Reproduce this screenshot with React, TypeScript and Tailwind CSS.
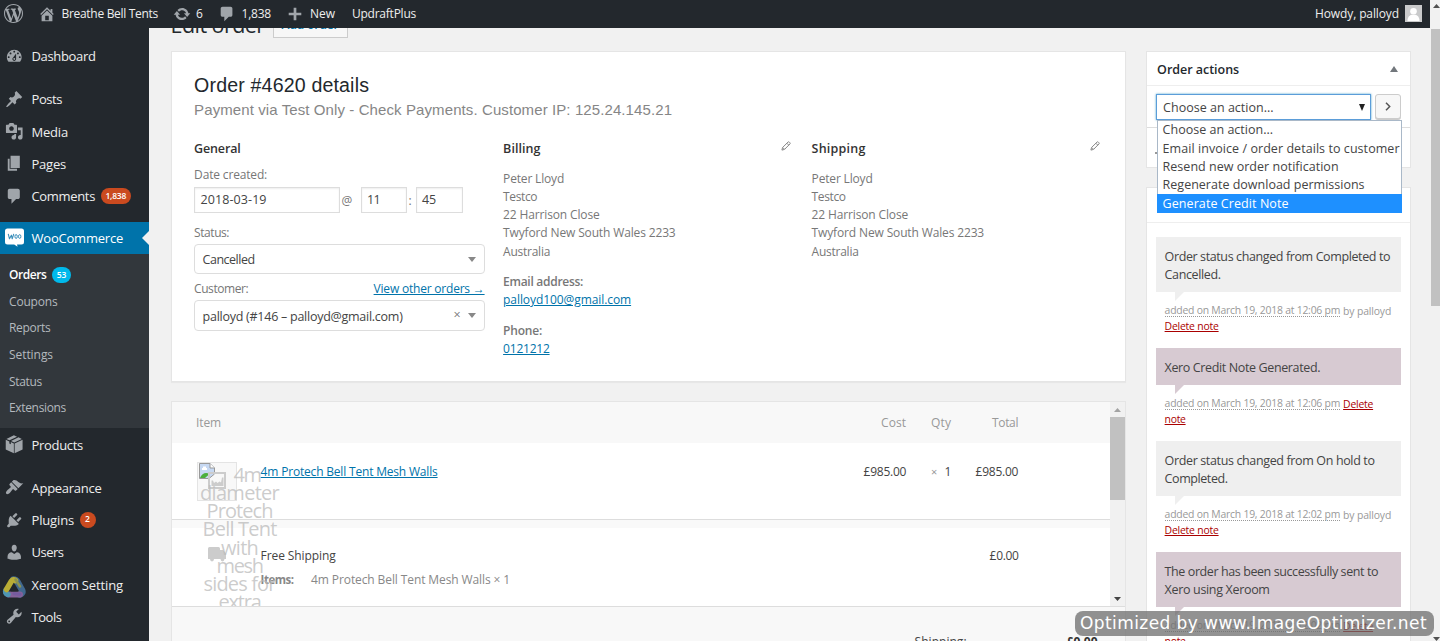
import { useLayoutEffect, useRef, type ReactNode } from "react";

const ICONS = {
  wordpress:
    "M20 10c0-5.51-4.49-10-10-10C4.48 0 0 4.49 0 10c0 5.52 4.48 10 10 10 5.51 0 10-4.48 10-10zM7.78 15.37L4.37 6.22c.55-.02 1.17-.08 1.17-.08.5-.06.44-1.13-.06-1.11 0 0-1.45.11-2.37.11-.18 0-.37 0-.58-.01C4.12 2.69 6.87 1.11 10 1.11c2.33 0 4.45.87 6.05 2.34-.68-.11-1.65.39-1.65 1.58 0 .74.45 1.36.9 2.1.35.61.55 1.36.55 2.46 0 1.49-1.4 5-1.4 5l-3.03-8.37c.54-.02.82-.17.82-.17.5-.05.44-1.25-.06-1.22 0 0-1.44.12-2.38.12-.87 0-2.33-.12-2.33-.12-.5-.03-.56 1.2-.06 1.22l.92.08 1.26 3.41zM17.41 10c.24-.64.74-1.87.43-4.25.7 1.29 1.05 2.71 1.05 4.25 0 3.29-1.73 6.24-4.4 7.78.97-2.59 1.94-5.2 2.92-7.78zM6.1 18.09C3.12 16.65 1.11 13.53 1.11 10c0-1.3.23-2.48.72-3.59C3.25 10.3 4.67 14.2 6.1 18.09zm4.03-6.63l2.58 6.98c-.86.29-1.76.45-2.71.45-.79 0-1.57-.11-2.29-.33.81-2.38 1.62-4.74 2.42-7.1z",
  dashboard:
    "M3.76 16h12.48c1.1-1.37 1.76-3.11 1.76-5 0-4.42-3.58-8-8-8s-8 3.58-8 8c0 1.89.66 3.63 1.76 5zM10 4c.55 0 1 .45 1 1s-.45 1-1 1-1-.45-1-1 .45-1 1-1zM6 6c.55 0 1 .45 1 1s-.45 1-1 1-1-.45-1-1 .45-1 1-1zm8 0c.55 0 1 .45 1 1s-.45 1-1 1-1-.45-1-1 .45-1 1-1zm-5.37 5.55L12 7v6c0 1.1-.9 2-2 2s-2-.9-2-2c0-.57.24-1.08.63-1.45zM4 10c.55 0 1 .45 1 1s-.45 1-1 1-1-.45-1-1 .45-1 1-1zm12 0c.55 0 1 .45 1 1s-.45 1-1 1-1-.45-1-1 .45-1 1-1zm-5 3c0-.55-.45-1-1-1s-1 .45-1 1 .45 1 1 1 1-.45 1-1z",
  post: "M10.44 3.02l1.82-1.82 6.36 6.35-1.83 1.82c-1.05-.68-2.48-.57-3.41.36l-.75.75c-.92.93-1.04 2.35-.35 3.41l-1.83 1.82-2.41-2.41-2.8 2.79c-.42.42-3.38 2.71-3.8 2.29s1.86-3.39 2.28-3.81l2.79-2.79L4.1 9.36l1.83-1.82c1.05.69 2.48.57 3.4-.36l.75-.75c.93-.92 1.05-2.35.36-3.41z",
  media:
    "M13 11V4c0-.55-.45-1-1-1h-1.67L9 1H5L3.67 3H2c-.55 0-1 .45-1 1v7c0 .55.45 1 1 1h10c.55 0 1-.45 1-1zM7 4.5c1.38 0 2.5 1.12 2.5 2.5S8.38 9.5 7 9.5 4.5 8.38 4.5 7 5.62 4.5 7 4.5zM14 6h5v10.5c0 1.38-1.12 2.5-2.5 2.5S14 17.88 14 16.5s1.12-2.5 2.5-2.5c.17 0 .34.02.5.05V9h-3V6zm-4 8.05V13h2v3.5c0 1.38-1.12 2.5-2.5 2.5S7 17.88 7 16.5 8.12 14 9.5 14c.17 0 .34.02.5.05z",
  page: "M6 15V2h10v13H6zm-1 1h8v2H3V5h2v11z",
  comments:
    "M5 2h9c1.1 0 2 .9 2 2v7c0 1.1-.9 2-2 2h-2l-5 5v-5H5c-1.1 0-2-.9-2-2V4c0-1.1.9-2 2-2z",
  home: "M16 8.5l1.53 1.53-1.06 1.06L10 4.6l-6.47 6.49-1.06-1.06L10 2.5l4 4v-2h2v4zm-6-2.46l6 5.99V18H4v-5.97zM12 17v-5H8v5h4z",
  update:
    "M10.2 3.28c3.53 0 6.43 2.61 6.92 6h2.08l-3.5 4-3.5-4h2.32c-.45-1.97-2.21-3.45-4.32-3.45-1.45 0-2.73.71-3.54 1.78L4.95 5.66C6.23 4.2 8.11 3.28 10.2 3.28zm-.4 13.44c-3.52 0-6.43-2.61-6.92-6H.8l3.5-4c1.17 1.33 2.33 2.67 3.5 4H5.48c.45 1.97 2.21 3.45 4.32 3.45 1.45 0 2.73-.71 3.54-1.78l1.71 1.95c-1.28 1.46-3.15 2.38-5.25 2.38z",
  plus: "M17 8.5v3h-5.5V17h-3v-5.5H3v-3h5.5V3h3v5.5z",
  products:
    "M9.6 0.4L13 1.8L4.9 5.6L1.5 4.2zM14.6 2.5L18.2 4.2L10 8L6.500 6.400zM0.800 5.200L4.700 7V9.300L6.300 10V7.700L9.600 9.200V19.600L0.800 15.600zM19 5.200V15.600L10.400 19.600V9.200z",
  appearance:
    "M14.48 11.06L7.41 3.99l1.5-1.5c.5-.56 2.3-.47 3.51.32 1.21.8 1.43 1.28 2.91 2.1 1.18.64 2.45 1.26 4.45.85zm-.71.71L6.7 4.7 4.93 6.47c-.39.39-.39 1.02 0 1.41l1.06 1.06c.39.39.39 1.03 0 1.42-.6.6-1.43 1.11-2.21 1.69-.35.26-.7.53-1.01.84C1.43 14.23.4 16.08 1.4 17.07c.99 1 2.84-.03 4.18-1.36.31-.31.58-.66.85-1.02.57-.78 1.08-1.61 1.69-2.21.39-.39 1.02-.39 1.41 0l1.06 1.06c.39.39 1.02.39 1.41 0z",
  plugins:
    "M13.11 4.36L9.87 7.6 8 5.73l3.24-3.24c.35-.34 1.05-.2 1.56.32.52.51.66 1.21.31 1.55zm-8 1.77l.91-1.12 9.01 9.01-1.19.84c-.71.71-2.63 1.16-3.82 1.16H6.14L4.9 17.26c-.59.59-1.54.59-2.12 0-.59-.58-.59-1.53 0-2.12l1.24-1.24v-3.88c0-1.13.4-3.19 1.09-3.89zm7.26 3.97l3.24-3.24c.34-.35 1.04-.21 1.55.31.52.51.66 1.21.31 1.55l-3.24 3.25z",
  users:
    "M10 9.25c-2.27 0-2.73-3.44-2.73-3.44C7 4.02 7.82 2 9.97 2c2.16 0 2.98 2.02 2.71 3.81 0 0-.41 3.44-2.68 3.44zm0 2.57L12.72 10c2.39 0 4.52 2.33 4.52 4.53v2.49s-3.65 1.13-7.24 1.13c-3.65 0-7.24-1.13-7.24-1.13v-2.49c0-2.25 1.94-4.48 4.47-4.48z",
  tools:
    "M16.68 9.77c-1.34 1.34-3.3 1.67-4.95.99l-5.41 6.52c-.99.99-2.59.99-3.58 0s-.99-2.59 0-3.57l6.52-5.42c-.68-1.65-.35-3.61.99-4.95 1.28-1.28 3.12-1.62 4.72-1.06l-2.89 2.89 2.82 2.82 2.86-2.87c.53 1.58.18 3.39-1.08 4.65zM3.81 16.21c.4.39 1.04.39 1.43 0 .4-.4.4-1.04 0-1.43-.39-.4-1.03-.4-1.43 0-.39.39-.39 1.03 0 1.43z",
};

function Icon({ name, className }: { name: keyof typeof ICONS; className: string }) {
  return (
    <svg viewBox="0 0 20 20" className={className} fill="currentColor">
      <path d={ICONS[name]} />
    </svg>
  );
}

/* One line of text whose tracking is adjusted so that it spans exactly w pixels. */
function T({ w, className = "", children }: { w: number; className?: string; children: string }) {
  const ref = useRef<HTMLSpanElement>(null);
  useLayoutEffect(() => {
    const el = ref.current;
    if (!el) return;
    el.style.letterSpacing = "0px";
    const natural = el.getBoundingClientRect().width;
    el.style.letterSpacing = `${(w - natural) / children.length}px`;
  }, [w, children]);
  return (
    <span ref={ref} className={`inline-block shrink-0 whitespace-pre ${className}`}>
      {children}
    </span>
  );
}

function MenuItem({ icon, label, w, children }: { icon: ReactNode; label: string; w: number; children?: ReactNode }) {
  return (
    <div className="flex h-[32.3px] shrink-0 items-center text-[13px] text-[#eeeeee]">
      <div className="flex w-[31.5px] shrink-0 items-center pl-[5px] text-[#a0a5aa]">{icon}</div>
      <T w={w} className="pt-[2px]">{label}</T>
      {children}
    </div>
  );
}

const MI = "h-[18.5px] w-[18.5px]";

function Sidebar() {
  return (
    <nav className="flex w-[149px] shrink-0 flex-col bg-[#23282d] pt-3">
      <MenuItem icon={<Icon name="dashboard" className={MI} />} label="Dashboard" w={64} />
      <div className="h-[10.6px] shrink-0" />
      <MenuItem icon={<Icon name="post" className={MI} />} label="Posts" w={30.5} />
      <MenuItem icon={<Icon name="media" className={MI} />} label="Media" w={36.5} />
      <MenuItem icon={<Icon name="page" className={MI} />} label="Pages" w={34.5} />
      <MenuItem icon={<Icon name="comments" className={MI} />} label="Comments" w={63.5}>
        <span className="ml-[6px] flex h-[16.5px] w-[29.5px] items-center justify-center rounded-full bg-[#ca4a1f] text-[8.5px] font-semibold text-white">
          <T w={20.5}>1,838</T>
        </span>
      </MenuItem>
      <div className="h-[9.9px] shrink-0" />
      <div className="flex h-8 shrink-0 items-center bg-[#0073aa] text-[13px] text-white">
        <svg viewBox="0 0 19 19" className="ml-[5px] mr-[7.5px] h-[19px] w-[19px] shrink-0">
          <path d="M2.5 0.5h14a2.5 2.5 0 0 1 2.5 2.5v11a2.5 2.5 0 0 1-2.5 2.5H12l.6 2.2-3.4-2.2H2.500a2.500 2.500 0 0 1-2.500-2.500v-11a2.500 2.500 0 0 1 2.500-2.500z" fill="#fff" />
          <path d="M3.300 6.200l1.200 4.600 1.900-3.600.8 3.600L8.700 6.200" fill="none" stroke="#3a8fbb" strokeWidth="1.100" strokeLinejoin="round" strokeLinecap="round" />
          <ellipse cx="11.100" cy="8.500" rx="1.200" ry="1.900" fill="none" stroke="#3a8fbb" strokeWidth="1" />
          <ellipse cx="14.700" cy="8.500" rx="1.200" ry="1.900" fill="none" stroke="#3a8fbb" strokeWidth="1" />
        </svg>
        <T w={91.5} className="pt-[2px]">WooCommerce</T>
        <svg viewBox="0 0 8 16" className="ml-auto h-4 w-[7.5px]">
          <path d="M8 0v16L0 8z" fill="#f1f1f1" />
        </svg>
      </div>
      <div className="flex h-[174.500px] shrink-0 flex-col bg-[#32373c] pl-[9px] pt-[8px] text-[12px] text-[#b4b9be]">
        <div className="flex h-[26.600px] items-center font-semibold text-white">
          <T w={37.500}>Orders</T>
          <span className="ml-[5.500px] flex h-4 w-[19px] items-center justify-center rounded-full bg-[#00b9eb] text-[8.500px]">
            <T w={9.500}>53</T>
          </span>
        </div>
        <div className="flex h-[26.600px] items-center"><T w={48.500}>Coupons</T></div>
        <div className="flex h-[26.600px] items-center"><T w={41.500}>Reports</T></div>
        <div className="flex h-[26.600px] items-center"><T w={44}>Settings</T></div>
        <div className="flex h-[26.600px] items-center"><T w={33}>Status</T></div>
        <div className="flex h-[26.600px] items-center"><T w={57}>Extensions</T></div>
      </div>
      <MenuItem icon={<Icon name="products" className={MI} />} label="Products" w={51.500} />
      <div className="h-[10.600px] shrink-0" />
      <MenuItem icon={<Icon name="appearance" className={MI} />} label="Appearance" w={70} />
      <MenuItem icon={<Icon name="plugins" className={MI} />} label="Plugins" w={42.500}>
        <span className="ml-[5.500px] flex h-4 w-4 items-center justify-center rounded-full bg-[#ca4a1f] text-[8.500px] font-semibold text-white">2</span>
      </MenuItem>
      <MenuItem icon={<Icon name="users" className={MI} />} label="Users" w={32} />
      <MenuItem
        icon={
          <svg viewBox="0 0 24 24" className="-ml-[3px] mt-[5px] h-6 w-6 shrink-0" fill="none" strokeLinecap="round" strokeLinejoin="round">
            <path d="M11.500 4.500c2 0 3 .8 4 2.500l4.500 8c1 2 .3 4-2 4.500" stroke="#41698f" strokeWidth="6.500" />
            <path d="M18 19.500H6.500" stroke="#84629a" strokeWidth="6" />
            <path d="M18 19.300l-6-.5" stroke="#765ba0" strokeWidth="3" />
            <path d="M6 19.500c-2.500-.8-3-2.500-2-4.500" stroke="#4f96b4" strokeWidth="5.500" />
            <path d="M4.500 14.500L9.500 6c1-1.500 3-1.800 4-.5" stroke="#b9ad35" strokeWidth="5.500" />
            <path d="M13.500 4.500l4.500 7" stroke="#8b9350" strokeWidth="2.500" />
            <path d="M12 10.500l4 6H8.500z" fill="#23282d" stroke="none" />
          </svg>
        }
        label="Xeroom Setting"
        w={91.500}
      />
      <MenuItem icon={<Icon name="tools" className={MI} />} label="Tools" w={30} />
    </nav>
  );
}

function AdminBar() {
  return (
    <header className="flex h-7 w-[1430px] shrink-0 items-center bg-[#23282d] pb-px text-[12px] text-[#eeeeee]">
      <Icon name="wordpress" className="ml-1 h-[19px] w-[19px] text-[#a0a5aa]" />
      <Icon name="home" className="ml-[14.500px] h-[18px] w-[18px] text-[#a0a5aa]" />
      <T w={96.500} className="ml-[6px]">Breathe Bell Tents</T>
      <Icon name="update" className="ml-[14.500px] h-[18px] w-[18px] text-[#a0a5aa]" />
      <T w={6.500} className="ml-[5.500px]">6</T>
      <Icon name="comments" className="ml-[15px] mt-px h-[18px] w-[18px] text-[#a0a5aa]" />
      <T w={29.500} className="ml-[6px]">1,838</T>
      <Icon name="plus" className="ml-[15px] h-[18px] w-[18px] text-[#a0a5aa]" />
      <T w={25} className="ml-[6px]">New</T>
      <T w={64} className="ml-[17px]">UpdraftPlus</T>
      <T w={84} className="ml-auto">Howdy, palloyd</T>
      <svg viewBox="0 0 17 17" className="ml-[6px] mr-[8px] h-[17px] w-[17px]">
        <rect width="17" height="17" fill="#c9cacb" />
        <circle cx="8.500" cy="6.200" r="3.300" fill="#fff" />
        <path d="M2.500 16c0-4 2-5.500 4-6.200h4c2 .7 4 2.200 4 6.200z" fill="#fff" />
      </svg>
    </header>
  );
}

function Pencil() {
  return (
    <svg viewBox="0 0 11 11" className="h-[10px] w-[10px]" fill="none" stroke="#888" strokeWidth="1.100">
      <path d="M1 10l.7-2.800L7.700 1.200a1 1 0 0 1 1.400 0l.7.7a1 1 0 0 1 0 1.400L3.800 9.300zM6.500 2.500l2 2M2 7.200l1.800 1.800" />
    </svg>
  );
}

function Caret() {
  return (
    <svg viewBox="0 0 8 6" preserveAspectRatio="none" className="h-[5px] w-2 shrink-0">
      <path d="M0 0h8L4 6z" fill="#888" />
    </svg>
  );
}

const LINE = "flex h-[18.250px] items-center";
const LINK = "text-[#0073aa] underline";

function Address({ title, w }: { title: string; w: number }) {
  return (
    <>
      <div className="flex h-[18px] items-center justify-between text-[12.500px] font-semibold text-[#333]">
        <T w={w} className="pt-[2px]">{title}</T>
        <span className="mb-[5px] mr-[2px]"><Pencil /></span>
      </div>
      <div className="mt-[12.500px]">
        <div className={LINE}><T w={61}>Peter Lloyd</T></div>
        <div className={LINE}><T w={34}>Testco</T></div>
        <div className={LINE}><T w={96.500}>22 Harrison Close</T></div>
        <div className={LINE}><T w={172.500}>Twyford New South Wales 2233</T></div>
        <div className={LINE}><T w={47}>Australia</T></div>
      </div>
    </>
  );
}

const FIELD =
  "flex h-[26px] items-center border border-[#ddd] pl-[5.500px] pt-[2px] text-[12.500px] shadow-[inset_0_1px_2px_rgba(0,0,0,0.07)]";

function OrderDetails() {
  return (
    <section className="h-[331px] w-[955px] shrink-0 border border-[#e5e5e5] bg-white pl-[22.500px] pt-[22px] text-[12px] text-[#777] shadow-[0_1px_1px_rgba(0,0,0,0.04)]">
      <h2 className="flex h-6 items-center font-['Liberation_Sans',Arial,sans-serif] text-[19.600px] text-[#23282d]">
        <T w={175}>Order #4620 details</T>
      </h2>
      <p className="flex h-6 items-center font-['Liberation_Sans',Arial,sans-serif] text-[15px] text-[#868686]">
        <T w={478}>Payment via Test Only - Check Payments. Customer IP: 125.24.145.21</T>
      </p>
      <div className="mt-[17px] flex">
        <div className="w-[290.500px]">
          <div className="flex h-[18px] items-center text-[12.500px] font-semibold text-[#333]"><T w={46.500} className="pt-[2px]">General</T></div>
          <div className="mt-[8px] flex h-[18px] items-center"><T w={73} className="pt-[2px]">Date created:</T></div>
          <div className="mt-[3.500px] flex h-[26px] items-center text-[#444]">
            <div className={`w-[146px] ${FIELD}`}><T w={66}>2018-03-19</T></div>
            <T w={11} className="ml-[1.500px] pt-[2px] text-[#777]">@</T>
            <div className={`ml-2 w-[46px] ${FIELD}`}><T w={13}>11</T></div>
            <T w={3} className="ml-[2px] pt-[2px] text-[#777]">:</T>
            <div className={`ml-[4px] w-[47px] ${FIELD}`}><T w={14}>45</T></div>
          </div>
          <div className="mt-[11px] flex h-[18px] items-center"><T w={35}>Status:</T></div>
          <div className="mt-[2.500px] flex h-[30px] items-center justify-between rounded-[4px] border border-[#ddd] pl-[7.500px] pr-2 text-[12.500px] text-[#444]">
            <T w={52} className="pt-[3px]">Cancelled</T>
            <Caret />
          </div>
          <div className="mt-[5.500px] flex h-[18px] items-center justify-between">
            <T w={54}>Customer:</T>
            <T w={111} className={LINK}>View other orders →</T>
          </div>
          <div className="mt-[2.500px] flex h-[31px] items-center rounded-[4px] border border-[#ddd] pl-[7.500px] pr-2 text-[12.500px] text-[#444]">
            <T w={200} className="pt-[3px]">palloyd (#146 – palloyd@gmail.com)</T>
            <span className="ml-auto mr-[7px] text-[12.500px] text-[#777]">×</span>
            <Caret />
          </div>
        </div>
        <div className="ml-[18.500px] w-[290px]">
          <Address title="Billing" w={37.500} />
          <div className="mt-[12px] flex h-[18.250px] items-center font-semibold"><T w={80}>Email address:</T></div>
          <div className={LINE}><T w={128} className={LINK}>palloyd100@gmail.com</T></div>
          <div className="mt-[12.500px] flex h-[18.250px] items-center font-semibold"><T w={39}>Phone:</T></div>
          <div className={LINE}><T w={46.500} className={LINK}>0121212</T></div>
        </div>
        <div className="ml-[18.500px] w-[290px]">
          <Address title="Shipping" w={54} />
        </div>
      </div>
    </section>
  );
}

const GHOST: [string, number, string][] = [
  ["4m", 27, "ml-[15px]"],
  ["diameter", 79, ""],
  ["Protech", 66, ""],
  ["Bell Tent", 74, ""],
  ["with", 37, ""],
  ["mesh", 46, ""],
  ["sides for", 72, ""],
  ["extra", 42, ""],
];

function ItemsTable() {
  return (
    <section className="mt-[19px] h-[260px] w-[955px] shrink-0 border border-[#e5e5e5] bg-[#f8f8f8] text-[12px] text-[#444]">
      <div className="relative flex h-[204.500px] overflow-hidden border-b border-[#ddd] bg-white">
        <div className="absolute left-[25px] top-[60px] h-[39px] w-10 border border-[#e4e4e4] bg-[#f8f8f8]" />
        <svg viewBox="0 0 16 16" className="absolute left-[27px] top-[61px] h-4 w-4">
          <path d="M.5.500h10.500l4.500 4.500v6L10 15.500H.5z" fill="#c6d8f2" stroke="#999" />
          <path d="M11 .5V5h4.500" fill="#fff" stroke="#999" />
          <path d="M1 15c2-5 6-6 9.500-4L6 15z" fill="#4caf3c" />
          <path d="M3 6h5M4 4.500h3" stroke="#fff" strokeWidth="2" />
        </svg>
        <svg viewBox="0 0 18 17" className="absolute left-[36px] top-[70px] h-[17px] w-[18px]" fill="none" stroke="#ccc" strokeWidth="2">
          <path d="M1 1h16v15H1z" />
          <path d="M3.500 14V8.500h1.500L6 11l2-1.500 1.500 1.500 2-1.500 1.500 1 1-5h1.500V14z" fill="#ccc" stroke="none" />
        </svg>
        <svg viewBox="0 0 18 15" className="absolute left-[36px] top-[145px] h-[15px] w-[18px]" fill="#ccc">
          <path d="M0 1.500A1.500 1.500 0 0 1 1.500 0h9A1.500 1.500 0 0 1 12 1.500V3h3l3 3.500V12h-1.500a2 2 0 0 1-4 0H6a2 2 0 0 1-4 0H0z" />
          <circle cx="4" cy="13" r="1.400" />
          <circle cx="14.500" cy="13" r="1.400" />
        </svg>
        <div className="flex w-[938px] flex-col">
          <div className="flex h-[41px] items-center bg-[#f8f8f8] pl-[24.500px] text-[#999]">
            <T w={25} className="pt-px">Item</T>
            <T w={25} className="ml-[660px] pt-px">Cost</T>
            <T w={20} className="ml-[25px] pt-px">Qty</T>
            <T w={26} className="ml-[41px] pt-px">Total</T>
          </div>
          <div className="flex h-[76.500px] items-start border-b border-[#ddd] pl-[89px] pt-[20px] leading-[18px]">
            <T w={177} className={LINK}>4m Protech Bell Tent Mesh Walls</T>
            <T w={42.500} className="ml-[426px]">£985.00</T>
            <T w={5.500} className="ml-[25px] text-[11px] text-[#999]">×</T>
            <T w={6} className="ml-[8px]">1</T>
            <T w={42.500} className="ml-[25px]">£985.00</T>
          </div>
          <div className="h-[8px] bg-[#f9f9f9]" />
          <div className="flex flex-1 flex-col pl-[89px] pt-[19.500px]">
            <div className="flex h-[18px] items-center">
              <T w={75}>Free Shipping</T>
              <T w={29} className="ml-[654px]">£0.00</T>
            </div>
            <div className="mt-[6px] flex h-[18px] items-center text-[#888]">
              <T w={33} className="text-[11.500px] font-bold">Items:</T>
              <T w={199} className="ml-[17.500px]">4m Protech Bell Tent Mesh Walls × 1</T>
            </div>
          </div>
        </div>
        <div className="absolute left-[18px] top-[63.500px] flex w-[100px] flex-col items-center text-[20px] leading-[18.250px] text-[#bbb]/75">
          {GHOST.map(([text, w, cls]) => (
            <T key={text} w={w} className={cls}>{text}</T>
          ))}
        </div>
        <div className="flex w-[15px] flex-col items-center bg-[#f1f1f1]">
          <svg viewBox="0 0 7 4" className="mt-[6px] h-1 w-[7px]"><path d="M0 4L3.500 0 7 4z" fill="#a3a3a3" /></svg>
          <div className="mt-[5px] h-[83px] w-full bg-[#c1c1c1]" />
          <svg viewBox="0 0 7 4" className="mb-[5px] mt-auto h-1 w-[7px]"><path d="M0 0h7L3.500 4z" fill="#444" /></svg>
        </div>
      </div>
      <div className="mt-[26px] flex h-[18px] items-center pl-[743px]">
        <T w={52}>Shipping:</T>
        <T w={31} className="ml-[100px] font-bold text-[#333]">£0.00</T>
      </div>
    </section>
  );
}

type NoteProps = { purple?: boolean; lines: [string, number][]; date: string; by?: boolean };

function Note({ purple, lines, date, by }: NoteProps) {
  return (
    <div className="shrink-0">
      <div className={`relative pb-[7.700px] pl-[9px] pt-[11px] text-[12.500px] text-[#444] ${purple ? "bg-[#d7cad2]" : "bg-[#efefef]"}`}>
        {lines.map(([text, w]) => (
          <div key={text} className="flex h-[18.250px] items-center"><T w={w}>{text}</T></div>
        ))}
        <svg viewBox="0 0 9 9" className="absolute left-[19px] top-full h-[9px] w-[9px]">
          <path d="M0 0h9L0 9z" fill={purple ? "#d7cad2" : "#efefef"} />
        </svg>
      </div>
      <div className="mt-[10.700px] pl-[9px] text-[10.400px] text-[#999]">
        <div className="flex h-[15.800px] items-center leading-[12px]">
          <T w={175.500} className="border-b border-dotted border-[#999] leading-[12px]">{date}</T>
          {by ? <T w={48} className="ml-[3px]">by palloyd</T> : <T w={30} className="ml-[3px] text-[#aa0000] underline">Delete</T>}
        </div>
        <div className="flex h-[15.800px] items-center text-[#aa0000]">
          {by ? <T w={54} className="underline">Delete note</T> : <T w={21} className="underline">note</T>}
        </div>
      </div>
      <div className="h-[13.600px]" />
    </div>
  );
}

const OPTIONS: [string, number][] = [
  ["Choose an action...", 110.500],
  ["Email invoice / order details to customer", 237],
  ["Resend new order notification", 176],
  ["Regenerate download permissions", 202],
];

function RightColumn() {
  return (
    <aside className="ml-5 flex w-[265px] shrink-0 flex-col text-[12.500px]">
      <section className="relative h-[117px] shrink-0 border border-[#e5e5e5] bg-white">
        <div className="flex h-[34px] items-center justify-between border-b border-[#eee] pl-[10.500px] pr-[12px] font-semibold text-[#23282d]">
          <T w={82} className="pt-[3px]">Order actions</T>
          <svg viewBox="0 0 8 6" className="h-[6px] w-2"><path d="M0 6L4 0l4 6z" fill="#72777c" /></svg>
        </div>
        <div className="flex h-[42px] items-start border-b border-[#ddd] pl-[9.500px] pt-[8px] text-[#444]">
          <div className="flex h-[26px] w-[214.500px] items-center justify-between border border-[#5b9dd9] pl-[6px] pr-[5px] shadow-[0_0_2px_rgba(30,140,190,0.8)]">
            <T w={110.500} className="pt-[2px]">Choose an action...</T>
            <svg viewBox="0 0 6 7" className="h-[7px] w-[6px]"><path d="M0 0h6L3 7z" fill="#222" /></svg>
          </div>
          <div className="ml-[4px] flex h-[25px] w-[26.500px] items-center justify-center rounded-[3px] border border-[#ccc] bg-[#f7f7f7] shadow-[0_1px_0_#ccc]">
            <svg viewBox="0 0 6 9" className="h-[9px] w-[6px]" fill="none" stroke="#555" strokeWidth="1.500"><path d="M1 .8l3.700 3.700L1 8.200" /></svg>
          </div>
        </div>
        <div className="flex h-[40px] items-center pl-[8px]">
          <span className="mt-[9px] h-[2px] w-[2px] bg-[#999]" />
        </div>
        <div className="absolute left-[10px] top-[68px] z-10 h-[93px] w-[245px] border border-[#a9b8c8] bg-white text-[#444]">
          {OPTIONS.map(([text, w]) => (
            <div key={text} className="flex h-[18.250px] items-center pl-[5px] pt-px"><T w={w}>{text}</T></div>
          ))}
          <div className="-mx-px flex h-[19px] items-center bg-[#1e90ff] pl-[6px] pt-px text-white"><T w={126}>Generate Credit Note</T></div>
        </div>
      </section>
      <section className="mt-[19px] flex h-[480px] shrink-0 flex-col border border-[#e5e5e5] bg-white">
        <div className="h-[34.500px] shrink-0 border-b border-[#eee]" />
        <div className="flex flex-col pl-[9px] pr-[9px] pt-[14.500px]">
          <Note lines={[["Order status changed from Completed to", 225.500], ["Cancelled.", 56]]} date="added on March 19, 2018 at 12:06 pm" by />
          <Note purple lines={[["Xero Credit Note Generated.", 155.500]]} date="added on March 19, 2018 at 12:06 pm" />
          <Note lines={[["Order status changed from On hold to", 210], ["Completed.", 63]]} date="added on March 19, 2018 at 12:02 pm" by />
          <Note purple lines={[["The order has been successfully sent to", 213.500], ["Xero using Xeroom", 105]]} date="added on March 19, 2018 at 12:02 pm" />
        </div>
      </section>
    </aside>
  );
}

export default function App() {
  return (
    <div className="relative flex h-[641px] w-[1440px] overflow-hidden bg-[#f1f1f1] font-['Open_Sans','Noto_Sans',sans-serif] leading-normal">
      <div className="flex w-[1430px] shrink-0 flex-col">
        <AdminBar />
        <div className="flex h-[613px] overflow-hidden">
          <Sidebar />
          <main className="flex flex-col overflow-hidden pl-[21.600px]">
            <div className="flex h-[23px] shrink-0 items-start">
              <h1 className="-mt-[18px] text-[21.500px] leading-[30px] text-[#23282d]"><T w={94}>Edit order</T></h1>
              <div className="-mt-[16px] ml-[8px] flex h-[26px] w-[75px] items-center justify-center border border-[#ccc] bg-[#f7f7f7] text-[12px] font-semibold text-[#0073aa]">
                <T w={57}>Add order</T>
              </div>
            </div>
            <div className="flex">
              <div className="flex flex-col">
                <OrderDetails />
                <ItemsTable />
              </div>
              <RightColumn />
            </div>
          </main>
        </div>
      </div>
      <div className="flex w-[10px] flex-col items-end bg-[#f1f1f1]">
        <svg viewBox="0 0 7 4" className="mt-[4px] h-1 w-[7px]"><path d="M0 4L3.500 0 7 4z" fill="#505050" /></svg>
        <div className="mt-[21px] h-[277px] w-[9px] bg-[#c1c1c1]" />
        <svg viewBox="0 0 7 4" className="mt-auto h-1 w-[7px]"><path d="M0 0h7L3.500 4z" fill="#505050" /></svg>
      </div>
      <div className="absolute left-[1075px] top-[611px] z-20 flex h-[25px] w-[359px] items-center rounded-[8px] bg-[#6e6e6e]/75 pl-[5px] font-['DejaVu_Sans',Verdana,sans-serif] text-[17px] text-white">
        <T w={347}>Optimized by www.ImageOptimizer.net</T>
      </div>
    </div>
  );
}
